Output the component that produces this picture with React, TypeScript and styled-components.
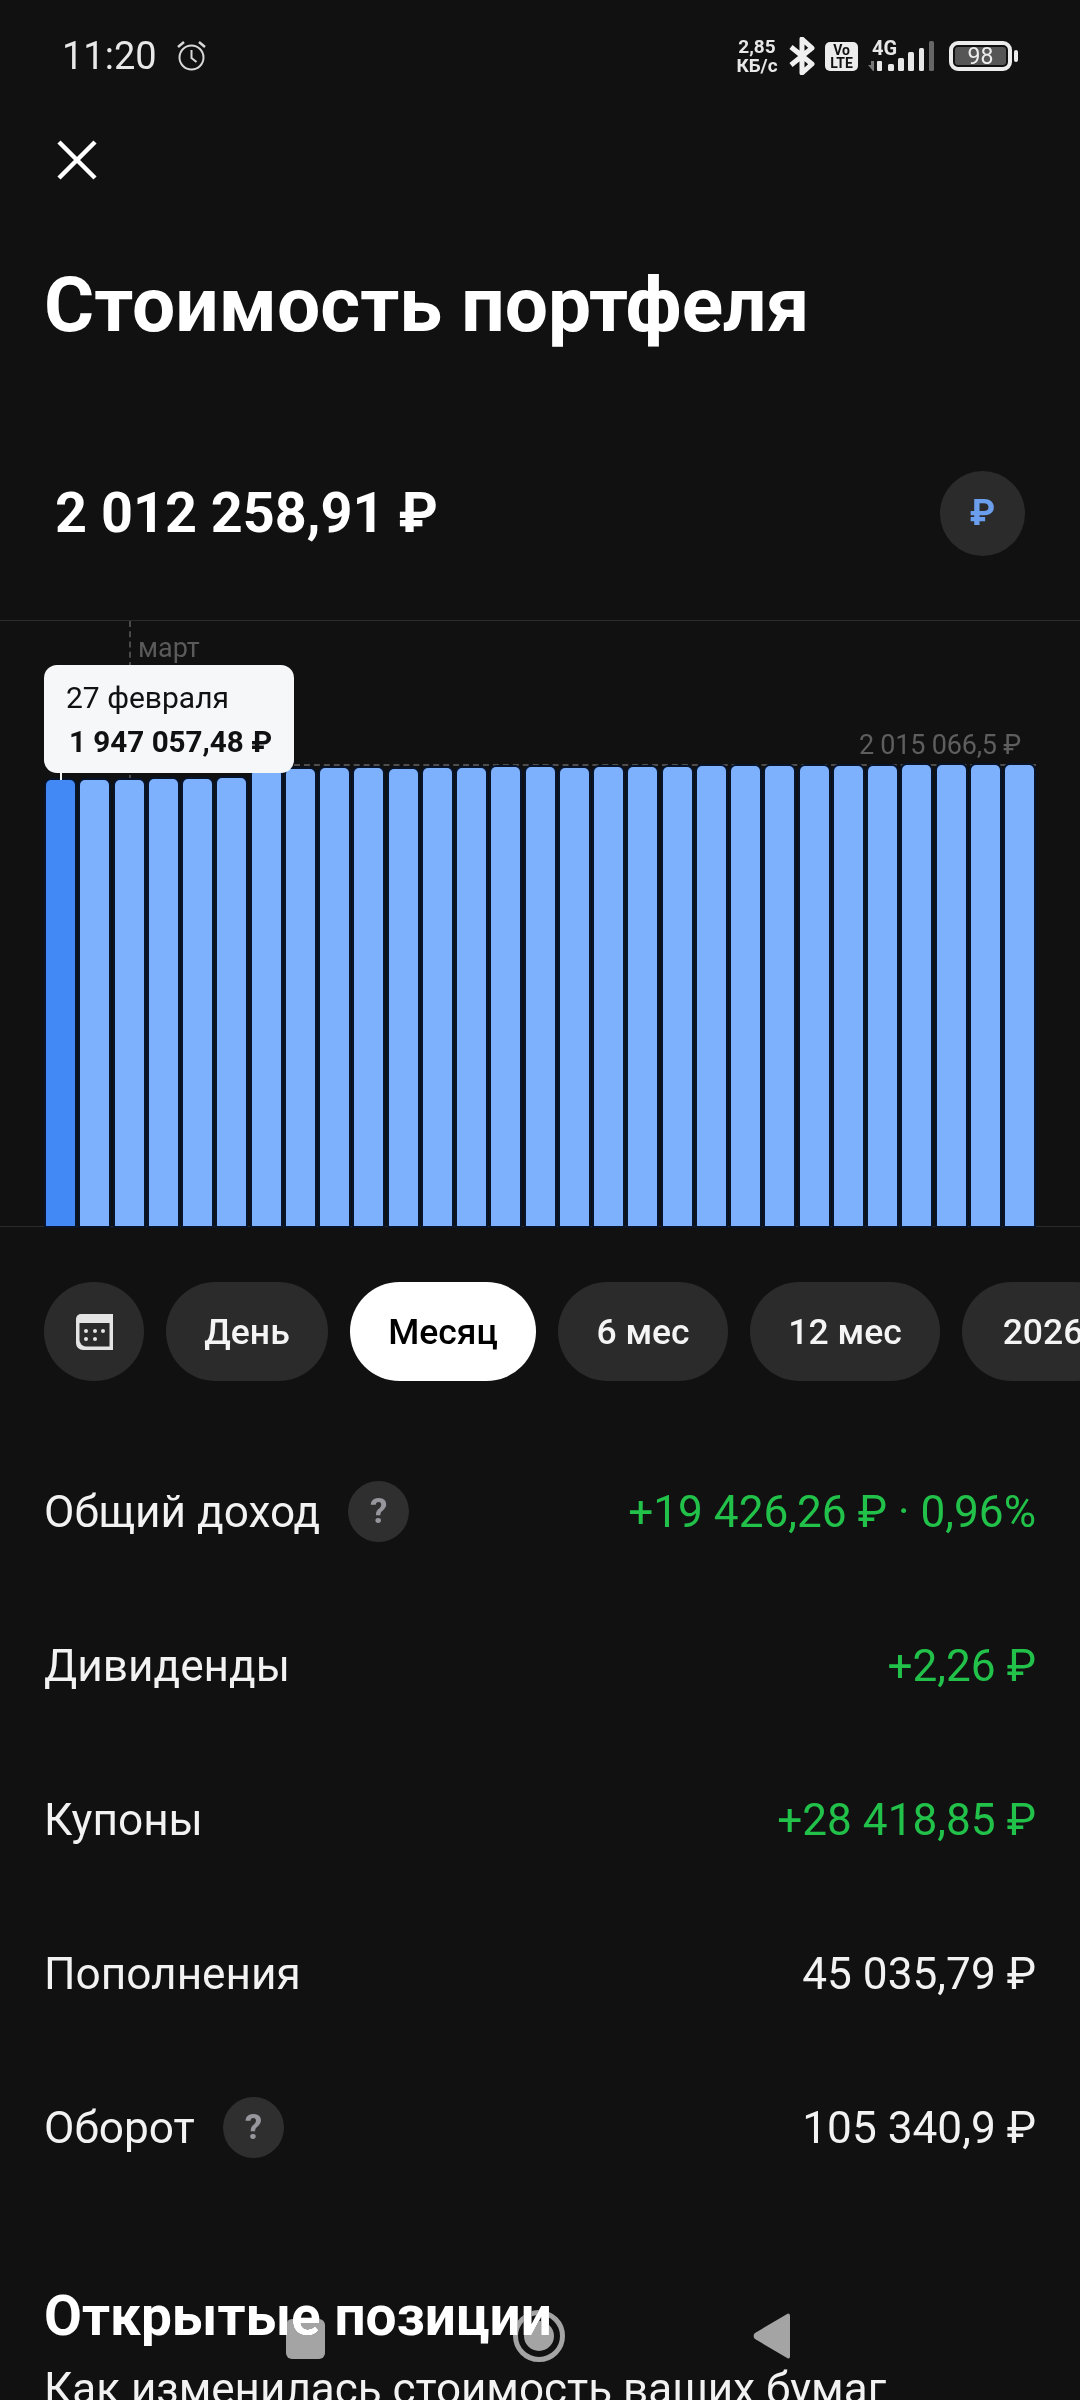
import React from "react";
import styled, { createGlobalStyle } from "styled-components";

const GlobalStyle = createGlobalStyle`
  html, body {
    margin: 0;
    padding: 0;
    background: #111112;
  }
  * {
    box-sizing: border-box;
  }
`;

const Screen = styled.div`
  position: relative;
  width: 1080px;
  height: 2400px;
  overflow: hidden;
  background: #111112;
  color: #fff;
  font-family: Roboto, "Noto Sans", sans-serif;
`;

const StatusBar = styled.div`
  height: 110px;
  padding: 38px 62px 0 62px;
  display: flex;
  justify-content: space-between;
  align-items: flex-start;
`;

const StatusLeft = styled.div`
  display: flex;
  align-items: center;
  gap: 18px;
  height: 36px;
`;

const Time = styled.span`
  font-size: 38px;
  line-height: 36px;
  color: #e8e8e8;
`;

const StatusRight = styled.div`
  display: flex;
  align-items: center;
  height: 36px;
`;

const Speed = styled.div`
  width: 42px;
  margin-right: 11px;
  font-size: 19px;
  line-height: 19px;
  font-weight: 700;
  text-align: center;
  color: #e8e8e8;
`;

const VoLte = styled.div`
  width: 33px;
  height: 29px;
  margin: 0 10px 0 10px;
  border-radius: 5px;
  background: #ececec;
  color: #111;
  font-size: 14px;
  line-height: 13px;
  font-weight: 700;
  text-align: center;
  padding-top: 2px;
`;

const Signal = styled.div`
  position: relative;
  width: 66px;
  height: 30px;
  margin-right: 15px;
`;

const NetLabel = styled.span`
  position: absolute;
  left: 4px;
  top: -2px;
  font-size: 20px;
  line-height: 18px;
  font-weight: 700;
  color: #e8e8e8;
`;

const Battery = styled.div`
  width: 63px;
  height: 30px;
  border: 4px solid #ececec;
  border-radius: 9px;
  padding: 2px;
`;

const BatteryFill = styled.div`
  height: 100%;
  border-radius: 3px;
  background: #565656;
  color: #ededed;
  font-size: 23px;
  line-height: 19px;
  text-align: center;
`;

const BatteryNub = styled.div`
  width: 4px;
  height: 12px;
  margin-left: 2px;
  border-radius: 2px;
  background: #ececec;
`;

const CloseRow = styled.div`
  height: 100px;
  padding-left: 57px;
  display: flex;
  align-items: center;
`;

const Title = styled.h1`
  margin: 52px 0 0 44px;
  font-size: 76.7px;
  line-height: 86px;
  font-weight: 700;
`;

const ValueRow = styled.div`
  height: 160px;
  margin: 89px 0 23px;
  padding: 0 55px 0 55px;
  display: flex;
  justify-content: space-between;
  align-items: center;
`;

const ValueText = styled.div`
  font-size: 55.8px;
  font-weight: 700;
  margin-top: -8px;
`;

const CurrencyButton = styled.div`
  width: 85px;
  height: 85px;
  margin-top: -8px;
  border-radius: 50%;
  background: #2b2b2c;
  color: #6b9fee;
  font-size: 36px;
  font-weight: 700;
  display: flex;
  align-items: center;
  justify-content: center;
`;

const Chart = styled.div`
  position: relative;
  height: 607px;
  border-top: 1px solid #2c2c2d;
  border-bottom: 1px solid #2c2c2d;
  padding-left: 46px;
  display: flex;
  align-items: flex-end;
  gap: 5.25px;
`;

const MonthTick = styled.div`
  position: absolute;
  left: 129px;
  top: 0;
  height: 160px;
  border-left: 2px dashed #4a4a4a;
`;

const MonthLabel = styled.span`
  position: absolute;
  left: 138px;
  top: 11px;
  font-size: 27px;
  line-height: 32px;
  color: #5a5a5a;
`;

const MaxLine = styled.div`
  position: absolute;
  left: 294px;
  right: 44px;
  top: 143px;
  border-top: 2px dashed #4e4e4e;
`;

const MaxLabel = styled.span`
  position: absolute;
  right: 59px;
  top: 108px;
  font-size: 27px;
  line-height: 32px;
  letter-spacing: -0.2px;
  color: #5e5e5e;
`;

const Bar = styled.div<{ $active?: boolean }>`
  position: relative;
  width: 29px;
  flex: none;
  border-radius: 5px 5px 0 0;
  background: ${(p) => (p.$active ? "#4289f5" : "#7db0fd")};
  box-shadow: 0 0 0 2px #07142a;
`;

const Tooltip = styled.div`
  position: absolute;
  left: 44px;
  top: 44px;
  width: 250px;
  height: 108px;
  padding: 14px 0 0 22px;
  border-radius: 13px;
  background: #f6f7f9;
  color: #111;
`;

const TooltipDate = styled.div`
  font-size: 30px;
  line-height: 38px;
`;

const TooltipValue = styled.div`
  margin: 7px 0 0 3px;
  font-size: 29.6px;
  line-height: 36px;
  font-weight: 700;
`;

const TooltipStem = styled.div`
  position: absolute;
  left: 60px;
  top: 152px;
  width: 2px;
  height: 7px;
  background: #f6f7f9;
`;

const Chips = styled.div`
  margin-top: 55px;
  padding-left: 44px;
  display: flex;
  gap: 22px;
`;

const Chip = styled.div<{ $selected?: boolean; $width: number }>`
  flex: none;
  width: ${(p) => p.$width}px;
  height: 99px;
  border-radius: 50px;
  background: ${(p) => (p.$selected ? "#fff" : "#2b2b2c")};
  color: ${(p) => (p.$selected ? "#000" : "#f4f4f4")};
  font-size: 35.5px;
  font-weight: 500;
  display: flex;
  align-items: center;
  justify-content: center;
`;

const Rows = styled.div`
  margin-top: 54px;
  padding: 0 44px 0 44px;
`;

const Row = styled.div`
  height: 154px;
  display: flex;
  justify-content: space-between;
  align-items: center;
  font-size: 44.2px;
`;

const RowLabel = styled.div`
  display: flex;
  align-items: center;
  gap: 28px;
  color: #f2f2f2;
`;

const HelpBadge = styled.span`
  width: 61px;
  height: 61px;
  margin-top: -1px;
  border-radius: 50%;
  background: #2f2f30;
  color: #96969c;
  font-size: 35px;
  font-weight: 700;
  display: flex;
  align-items: center;
  justify-content: center;
`;

const RowValue = styled.div<{ $positive?: boolean }>`
  color: ${(p) => (p.$positive ? "#22c24a" : "#f2f2f2")};
`;

const SectionTitle = styled.h2`
  margin: 79px 0 0 44px;
  font-size: 55px;
  line-height: 64px;
  font-weight: 700;
`;

const SectionText = styled.div`
  margin: 15px 0 0 44px;
  font-size: 44px;
  line-height: 52px;
  white-space: nowrap;
  color: #f2f2f2;
`;

const NavOverlay = styled.div`
  position: absolute;
  left: 286px;
  top: 2310px;
  width: 504px;
  height: 52px;
  display: flex;
  justify-content: space-between;
  align-items: center;
  mix-blend-mode: lighten;
`;

const NavSquare = styled.div`
  width: 39px;
  height: 40px;
  margin-top: 5px;
  border-radius: 6px;
  background: #a4a4a4;
`;

const NavRing = styled.div`
  width: 52px;
  height: 52px;
  border-radius: 50%;
  border: 5px solid #a4a4a4;
  display: flex;
  align-items: center;
  justify-content: center;
  &::after {
    content: "";
    width: 30px;
    height: 30px;
    border-radius: 50%;
    background: #a4a4a4;
  }
`;

// bar heights from the left, px above the baseline
const barHeights = [
  446, 446, 446, 447, 447, 448, 457, 457, 458, 458, 457, 458, 458, 459, 459,
  458, 459, 459, 459, 460, 460, 460, 460, 460, 460, 461, 461, 461, 461,
];

const rows = [
  { label: "Общий доход", help: true, value: "+19 426,26 ₽ · 0,96%", positive: true },
  { label: "Дивиденды", value: "+2,26 ₽", positive: true },
  { label: "Купоны", value: "+28 418,85 ₽", positive: true },
  { label: "Пополнения", value: "45 035,79 ₽" },
  { label: "Оборот", help: true, value: "105 340,9 ₽" },
];

const AlarmIcon = () => (
  <svg width="33" height="32" viewBox="0 0 33 32" fill="none" stroke="#d8d8d8" strokeWidth="2">
    <circle cx="16.5" cy="17.5" r="12" />
    <path d="M16.5 10v8l5 4" />
    <path d="M3 7l6-5M30 7l-6-5" strokeWidth="2.5" />
  </svg>
);

const BluetoothIcon = () => (
  <svg width="26" height="38" viewBox="0 0 26 38" fill="none" stroke="#f0f0f0" strokeWidth="5" strokeLinejoin="round">
    <path d="M2 10l21 17-10 9V2l10 9L2 28" />
  </svg>
);

const SignalIcon = () => (
  <svg width="66" height="30" viewBox="0 0 66 30">
    <path d="M0 24h3v-4h3v10h-1z" fill="#777" />
    <rect x="9" y="20" width="5" height="10" rx="1" fill="#e8e8e8" />
    <rect x="20" y="23" width="6" height="7" rx="1.5" fill="#e8e8e8" />
    <rect x="30" y="17" width="6" height="13" rx="1.5" fill="#e8e8e8" />
    <rect x="40" y="11" width="6" height="19" rx="1.5" fill="#e8e8e8" />
    <rect x="51" y="7" width="5" height="23" rx="1.5" fill="#e8e8e8" />
    <rect x="61" y="0" width="5" height="30" rx="1.5" fill="#666" />
  </svg>
);

const CloseIcon = () => (
  <svg width="40" height="40" viewBox="0 0 40 40" stroke="#fff" strokeWidth="4.5">
    <path d="M2 2l36 36M38 2L2 38" />
  </svg>
);

const CalendarIcon = () => (
  <svg width="37" height="36" viewBox="0 0 37 36">
    <path d="M5 0h32v36H7a7 7 0 0 1-7-7V5a5 5 0 0 1 5-5z" fill="#e4e4e4" />
    <path d="M3.5 9h30v23.5H10a6.5 6.5 0 0 1-6.5-6.5z" fill="#2b2b2c" />
    <g fill="#e4e4e4">
      <circle cx="10" cy="17" r="2" />
      <circle cx="19" cy="17" r="2" />
      <circle cx="27" cy="17" r="2" />
      <circle cx="10" cy="25" r="2" />
      <circle cx="19" cy="25" r="2" />
    </g>
  </svg>
);

const BackIcon = () => (
  <svg width="37" height="46" viewBox="0 0 37 46" fill="#a4a4a4">
    <path d="M35 0.5a2 2 0 0 1 2 2V44a2 2 0 0 1-2 1.5L2 26a4 4 0 0 1 0-6z" />
  </svg>
);

export default function App() {
  return (
    <Screen>
      <GlobalStyle />
      <StatusBar>
        <StatusLeft>
          <Time>11:20</Time>
          <AlarmIcon />
        </StatusLeft>
        <StatusRight>
          <Speed>
            2,85
            <br />
            КБ/с
          </Speed>
          <BluetoothIcon />
          <VoLte>
            Vo
            <br />
            LTE
          </VoLte>
          <Signal>
            <NetLabel>4G</NetLabel>
            <SignalIcon />
          </Signal>
          <Battery>
            <BatteryFill>98</BatteryFill>
          </Battery>
          <BatteryNub />
        </StatusRight>
      </StatusBar>

      <CloseRow>
        <CloseIcon />
      </CloseRow>

      <Title>Стоимость портфеля</Title>

      <ValueRow>
        <ValueText>2 012 258,91 ₽</ValueText>
        <CurrencyButton>₽</CurrencyButton>
      </ValueRow>

      <Chart>
        <MonthTick />
        <MonthLabel>март</MonthLabel>
        <MaxLine />
        <MaxLabel>2 015 066,5 ₽</MaxLabel>
        {barHeights.map((h, i) => (
          <Bar key={i} $active={i === 0} style={{ height: h }} />
        ))}
        <TooltipStem />
        <Tooltip>
          <TooltipDate>27 февраля</TooltipDate>
          <TooltipValue>1 947 057,48 ₽</TooltipValue>
        </Tooltip>
      </Chart>

      <Chips>
        <Chip $width={100}>
          <CalendarIcon />
        </Chip>
        <Chip $width={162}>День</Chip>
        <Chip $width={186} $selected>
          Месяц
        </Chip>
        <Chip $width={170}>6 мес</Chip>
        <Chip $width={190}>12 мес</Chip>
        <Chip $width={162}>2026</Chip>
      </Chips>

      <Rows>
        {rows.map((r) => (
          <Row key={r.label}>
            <RowLabel>
              {r.label}
              {r.help && <HelpBadge>?</HelpBadge>}
            </RowLabel>
            <RowValue $positive={r.positive}>{r.value}</RowValue>
          </Row>
        ))}
      </Rows>

      <SectionTitle>Открытые позиции</SectionTitle>
      <SectionText>Как изменилась стоимость ваших бумаг</SectionText>

      <NavOverlay>
        <NavSquare />
        <NavRing />
        <BackIcon />
      </NavOverlay>
    </Screen>
  );
}
